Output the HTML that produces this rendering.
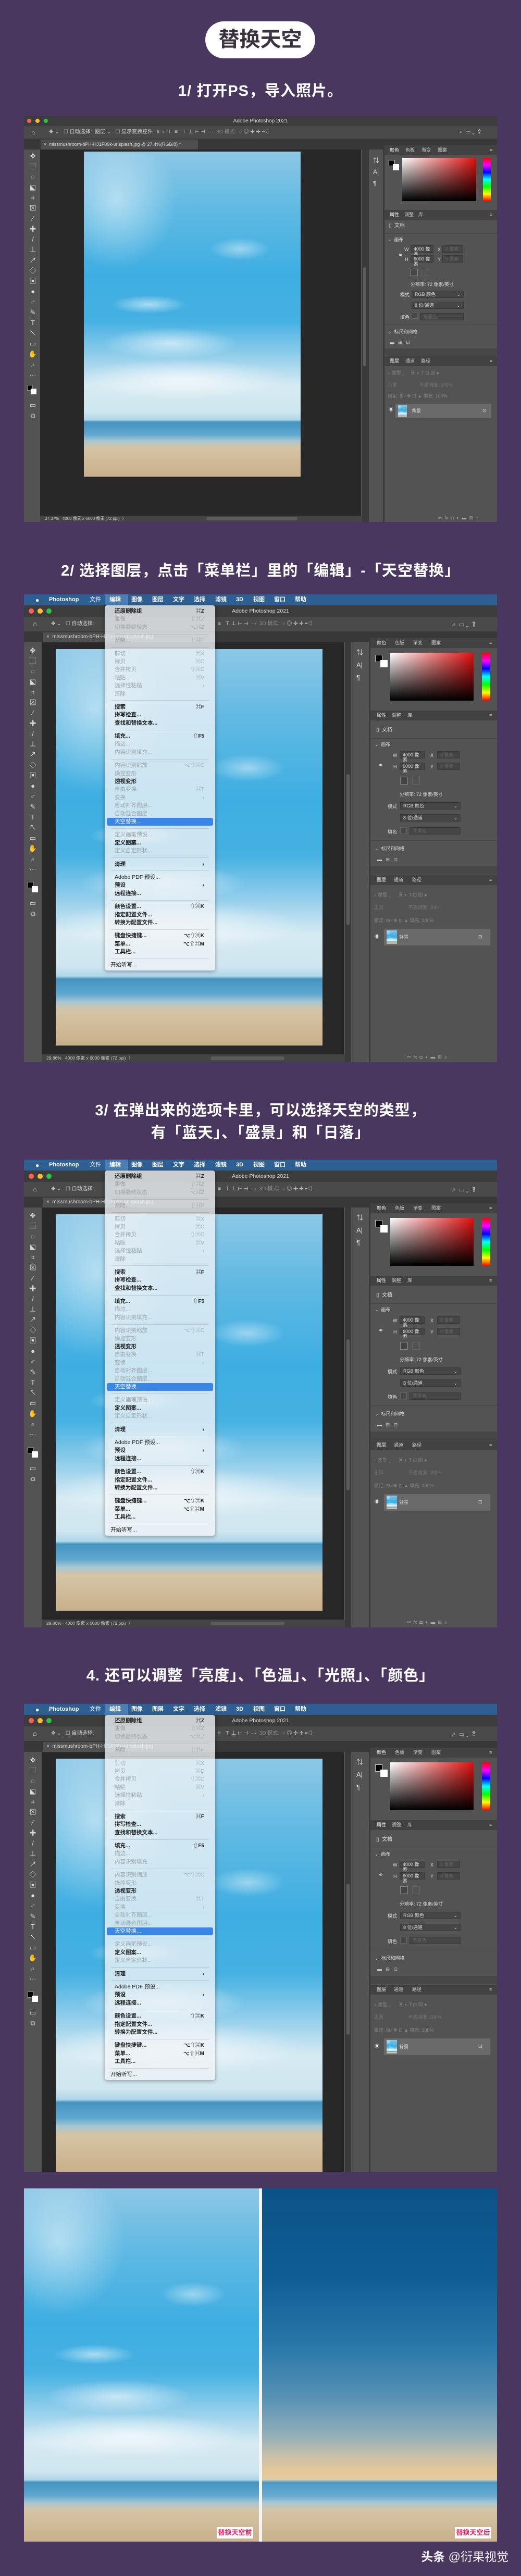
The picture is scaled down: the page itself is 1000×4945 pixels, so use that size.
<!DOCTYPE html>
<html><head><meta charset="utf-8">
<style>
*{margin:0;padding:0;box-sizing:border-box}
body{width:1000px;height:4945px;background:#4a3760;position:relative;overflow:hidden;font-family:"Liberation Sans","Noto Sans CJK SC",sans-serif}
.a{position:absolute}
.cap{position:absolute;left:0;width:1000px;text-align:center;color:#fff;font-size:29px;font-weight:700;font-family:"Liberation Sans","Noto Sans CJK SC",sans-serif;line-height:40px;letter-spacing:1px}
.pill{position:absolute;left:394px;top:41px;width:211px;height:71px;border-radius:36px;background:#fff;color:#3b3242;font-size:40px;font-weight:700;text-align:center;line-height:71px;font-family:"Liberation Sans","Noto Sans CJK SC",sans-serif}
.ps{position:absolute;left:46px;width:908px;overflow:hidden;background:#535353;color:#ddd;font-size:9px;line-height:1}
.ps .a{white-space:nowrap}
.sky{background:
 radial-gradient(ellipse 40% 30% at 15% 15%,rgba(255,255,255,.5),transparent 70%),
 radial-gradient(ellipse 20% 5% at 72% 30%,rgba(255,255,255,.45),transparent 70%),
 radial-gradient(ellipse 25% 4% at 30% 47%,rgba(255,255,255,.55),transparent 70%),
 radial-gradient(ellipse 45% 7% at 40% 59%,rgba(255,255,255,.6),transparent 70%),
 radial-gradient(ellipse 70% 9% at 45% 70%,rgba(255,255,255,.7),transparent 70%),
 linear-gradient(to bottom,#8cc7e6 0%,#5fb9e3 18%,#3eaee2 38%,#45b1e2 52%,#8ccbea 62%,#d6eaf2 72%,#cfe6f0 80%,#b0d6e8 82.5%,#4493bf 83.2%,#5ea7cf 87%,#a6c6d2 89%,#d5c4a5 91%,#c9b08a 100%)}
.after{background:
 linear-gradient(to bottom,#0b5288 0%,#0f5d94 25%,#2a78aa 45%,#5a93b5 60%,#93aeb9 70%,#c9c0a8 76%,#e9c994 81%,#d8cdb0 82.5%,#4c9ac4 83.2%,#66abd0 87%,#a6c6d2 89%,#d5c4a5 91%,#c9b08a 100%)}
.hdr{position:absolute;background:#424242;height:19px}
.hdr span{position:absolute;top:5px;color:#ccc;font-size:9px}
.tools span{position:absolute;left:6px;color:#d8d8d8;font-size:13px;line-height:14px;width:18px;text-align:center}
.menu{position:absolute;left:155px;top:21px;width:212px;height:701px;background:rgba(238,243,246,.8);border-radius:5px;box-shadow:0 2px 8px rgba(0,0,0,.35);padding-top:4px}
.menu div{position:relative;height:15.4px;line-height:15.4px;padding-left:19px;font-size:10.5px;color:#1b1b1b;font-weight:700}
.menu div.d{color:#9aa3a8;font-weight:400}
.menu div i{position:absolute;right:21px;top:0;font-style:normal;font-size:10px}
.menu hr{border:0;border-top:1px solid rgba(0,0,0,.12);margin:4.5px 12px 4.5px 12px}
.menu div.h{background:#3a85e8;color:#fff;margin:0 4px;padding-left:15px;border-radius:3px;font-weight:400}
.bar{position:absolute;left:0;width:908px;height:21px;background:#2d5f92;color:#fff;font-size:11px;font-weight:700}
.bar span{position:absolute;top:5px}
.dd{position:absolute;background:#454545;border:1px solid #3a3a3a;height:14px;color:#ddd;font-size:9px;padding:2px 5px}
.lt{position:absolute;width:10px;height:10px;border-radius:50%}
.lbl{position:absolute;height:22px;background:#fff;color:#d8235a;font-size:13px;font-weight:700;text-align:center;line-height:22px;white-space:nowrap}
</style></head><body>

<div class="pill">替换天空</div>
<div class="cap" style="top:155px">1/ 打开PS，导入照片。</div>

<!-- SCREEN 1 -->
<div class="ps" style="top:223px;height:779px">
 <div class="a" style="left:0;top:0;width:908px;height:19px;background:#3c3c3c"></div>
 <div class="lt" style="left:6px;top:5px;width:8px;height:8px;background:#fe5f57"></div>
 <div class="lt" style="left:22px;top:5px;width:8px;height:8px;background:#febc2e"></div>
 <div class="lt" style="left:38px;top:5px;width:8px;height:8px;background:#28c840"></div>
 <div class="a" style="left:0;width:908px;top:5px;text-align:center;font-size:10px;color:#ddd">Adobe Photoshop 2021</div>
 <div class="a" style="left:0;top:19px;width:908px;height:24px;background:#4a4a4a"></div>
 <div class="a" style="left:14px;top:25px;font-size:12px;color:#ddd">⌂</div>
 <div class="a" style="left:48px;top:26px;font-size:10px;color:#ccc">✥ ⌄ &nbsp; ☐ 自动选择: &nbsp;图层 ⌄ &nbsp; ☐ 显示变换控件 &nbsp; ⊫ ⊨ ⊧ &nbsp;≡ &nbsp; ⊤ ⊥ ⊢ ⊣ &nbsp;··· &nbsp;<span style="color:#888">3D 模式:</span> &nbsp;◌ ◎ ✣ ✢ ▪◁</div>
 <div class="a" style="left:836px;top:25px;font-size:11px;color:#ddd">⌕ &nbsp;▭ ⌄ &nbsp;⇪</div>
 <div class="a" style="left:0;top:43px;width:908px;height:21px;background:#383838"></div>
 <div class="a" style="left:32px;top:45px;width:302px;height:19px;background:#4f4f4f;color:#ddd;font-size:9px;padding:5px 6px">×&nbsp; missmushroom-bPH-HJ1F09k-unsplash.jpg @ 27.4%(RGB/8) *</div>
 <div class="tools a" style="left:2px;top:64px;width:25px;height:703px">
  <span style="top:6px">✥</span><span style="top:26px">⬚</span><span style="top:46px">◌</span><span style="top:66px">⬕</span><span style="top:86px">⌗</span><span style="top:106px">⊠</span><span style="top:126px">⁄</span><span style="top:146px">✚</span><span style="top:166px">/</span><span style="top:186px">⊥</span><span style="top:206px">↗</span><span style="top:226px">◇</span><span style="top:246px">▣</span><span style="top:266px">●</span><span style="top:286px">♂</span><span style="top:306px">✎</span><span style="top:326px">T</span><span style="top:346px">↖</span><span style="top:366px">▭</span><span style="top:386px">✋</span><span style="top:406px">⌕</span><span style="top:426px">···</span>
  <div class="a" style="left:4px;top:452px;width:11px;height:11px;background:#000;border:1px solid #888"></div>
  <div class="a" style="left:11px;top:459px;width:11px;height:11px;background:#fff"></div>
  <span style="top:484px">▭</span><span style="top:504px">⧉</span>
 </div>
 <div class="a" style="left:31px;top:64px;width:616px;height:703px;background:#282828"></div>
 <div class="a sky" style="left:115px;top:68px;width:416px;height:624px"></div>
 <div class="a" style="left:649px;top:64px;width:11px;height:715px;background:#3a3a3a"></div>
 <div class="a" style="left:651px;top:290px;width:6px;height:190px;background:#5c5c5c;border-radius:3px"></div>
 <div class="a" style="left:660px;top:64px;width:2px;height:715px;background:#3a3a3a"></div>
 <div class="a" style="left:689px;top:64px;width:3px;height:715px;background:#3a3a3a"></div>
 <div class="a" style="left:670px;top:74px;font-size:12px;color:#ddd;line-height:22px">⇅<br>A|<br>¶</div>
 <div class="hdr" style="left:692px;top:56px;width:216px"><span style="left:10px;color:#eee">颜色</span><span style="left:40px">色板</span><span style="left:71px">渐变</span><span style="left:102px">图案</span><span style="left:202px">≡</span></div>
 <div class="a" style="left:700px;top:84px;width:12px;height:12px;background:#000;border:1px solid #ccc"></div>
 <div class="a" style="left:708px;top:92px;width:12px;height:12px;background:#fff"></div>
 <div class="a" style="left:726px;top:80px;width:142px;height:83px;background:linear-gradient(to bottom,rgba(0,0,0,0),#000),linear-gradient(to right,#fff,#e01010)"></div>
 <div class="a" style="left:881px;top:80px;width:15px;height:83px;background:linear-gradient(to bottom,#f00,#f0f,#00f,#0ff,#0f0,#ff0,#f00)"></div>
 <div class="hdr" style="left:692px;top:180px;width:216px"><span style="left:10px;color:#eee">属性</span><span style="left:38px">调整</span><span style="left:65px">库</span><span style="left:202px">≡</span></div>
 <div class="a" style="left:700px;top:206px;font-size:10px">▯ &nbsp;文档</div>
 <div class="a" style="left:692px;top:225px;width:216px;height:1px;background:#444"></div>
 <div class="a" style="left:698px;top:233px">⌄ &nbsp;画布</div>
 <div class="a" style="left:718px;top:262px;font-size:11px">⚭</div>
 <div class="a" style="left:730px;top:252px">W</div><div class="dd" style="left:742px;top:248px;width:44px">4000 像素</div><div class="a" style="left:794px;top:252px">X</div><div class="dd" style="left:803px;top:248px;width:40px;color:#666">0 像素</div>
 <div class="a" style="left:731px;top:271px">H</div><div class="dd" style="left:742px;top:267px;width:44px">6000 像素</div><div class="a" style="left:794px;top:271px">Y</div><div class="dd" style="left:803px;top:267px;width:40px;color:#666">0 像素</div>
 <div class="a" style="left:742px;top:293px;width:14px;height:14px;border:1px solid #888;background:#454545"></div><div class="a" style="left:762px;top:293px;width:14px;height:14px;border:1px solid #666"></div>
 <div class="a" style="left:742px;top:319px">分辨率: 72 像素/英寸</div>
 <div class="a" style="left:722px;top:339px">模式</div><div class="dd" style="left:744px;top:335px;width:100px">RGB 颜色 <span style="float:right">⌄</span></div>
 <div class="dd" style="left:744px;top:356px;width:100px">8 位/通道 <span style="float:right">⌄</span></div>
 <div class="a" style="left:722px;top:382px">填色</div><div class="a" style="left:744px;top:377px;width:12px;height:12px;background:#474747;border:1px solid #666"></div><div class="dd" style="left:760px;top:378px;width:84px;color:#666">背景色</div>
 <div class="a" style="left:692px;top:400px;width:216px;height:1px;background:#444"></div>
 <div class="a" style="left:698px;top:410px">⌄ &nbsp;标尺和网格</div>
 <div class="a" style="left:702px;top:430px;color:#ccc">▬ &nbsp; ⊞ &nbsp; ⊡</div>
 <div class="a" style="left:692px;top:446px;width:216px;height:14px;background:#474747"></div>
 <div class="hdr" style="left:692px;top:461px;width:216px"><span style="left:10px;color:#eee">图层</span><span style="left:40px">通道</span><span style="left:70px">路径</span><span style="left:202px">≡</span></div>
 <div class="a" style="left:698px;top:489px;color:#888">⌕ 类型 ⌄ &nbsp; &nbsp; ▣ ◐ T ⊡ ⊠ ●</div>
 <div class="a" style="left:698px;top:512px;color:#777">正常 &nbsp; &nbsp; &nbsp; &nbsp; &nbsp; &nbsp; &nbsp; &nbsp; 不透明度: 100%</div>
 <div class="a" style="left:698px;top:533px;color:#888">锁定: ⊞ ⁄ ✥ ⊡ ▲ 填充: 100%</div>
 <div class="a" style="left:700px;top:559px;color:#ddd">◉</div>
 <div class="a" style="left:713px;top:552px;width:184px;height:27px;background:#6a6a6a"></div>
 <div class="a sky" style="left:718px;top:555px;width:17px;height:22px"></div>
 <div class="a" style="left:744px;top:562px">背景</div><div class="a" style="left:880px;top:561px">⊡</div>
 <div class="a" style="left:795px;top:767px;color:#aaa">⚯ &nbsp;fx &nbsp;◘ &nbsp;◐ &nbsp;▬ &nbsp;⊞ &nbsp;⌂</div>
 <div class="a" style="left:31px;top:767px;width:618px;height:12px;background:#444"></div>
 <div class="a" style="left:40px;top:769px;font-size:8px;color:#ccc">27.37% &nbsp; 4000 像素 x 6000 像素 (72 ppi) &nbsp;〉</div>
 <div class="a" style="left:350px;top:769px;width:175px;height:7px;border-radius:4px;background:#5c5c5c"></div>
</div>

<div class="cap" style="top:1076px">2/ 选择图层，点击「菜单栏」里的「编辑」-「天空替换」</div>

<!-- SCREEN 2 -->
<div class="ps" style="top:1141px;height:898px">
 <div class="bar" style="top:0"><span style="left:22px;font-size:12px">●</span><span style="left:48px">Photoshop</span><span style="left:126px;font-weight:400">文件</span><span style="left:155px;top:0;width:45px;height:21px;background:#4a7fb5"></span><span style="left:164px">编辑</span><span style="left:206px">图像</span><span style="left:246px">图层</span><span style="left:286px">文字</span><span style="left:326px">选择</span><span style="left:367px">滤镜</span><span style="left:407px">3D</span><span style="left:440px">视图</span><span style="left:480px">窗口</span><span style="left:520px">帮助</span></div>
 <div class="a" style="left:0;top:21px;width:908px;height:22px;background:#3c3c3c"></div>
 <div class="lt" style="left:9px;top:27px;background:#fe5f57"></div><div class="lt" style="left:26px;top:27px;background:#febc2e"></div><div class="lt" style="left:43px;top:27px;background:#28c840"></div>
 <div class="a" style="left:0;width:908px;top:27px;text-align:center;font-size:10.5px;color:#ddd">Adobe Photoshop 2021</div>
 <div class="a" style="left:0;top:43px;width:908px;height:28px;background:#4a4a4a"></div>
 <div class="a" style="left:17px;top:50px;font-size:13px;color:#ddd">⌂</div>
 <div class="a" style="left:52px;top:52px;font-size:10px;color:#ccc">✥ ⌄ &nbsp; ☐ 自动选择: </div>
 <div class="a" style="left:372px;top:52px;font-size:10px;color:#ccc">≡ &nbsp; ⊤ ⊥ ⊢ ⊣ &nbsp;··· &nbsp;<span style="color:#888">3D 模式:</span> &nbsp;◌ ◎ ✣ ✢ ▪◁</div>
 <div class="a" style="left:822px;top:51px;font-size:12px;color:#ddd">⌕ &nbsp;▭ ⌄ &nbsp;⇪</div>
 <div class="a" style="left:0;top:71px;width:908px;height:21px;background:#383838"></div>
 <div class="a" style="left:36px;top:73px;width:330px;height:19px;background:#4f4f4f;color:#ddd;font-size:10px;padding:4px 7px">×&nbsp; missmushroom-bPH-HJ1F09k-unsplash.jpg</div>
 <div class="tools a" style="left:2px;top:92px;width:29px;height:791px">
  <span style="top:9px">✥</span><span style="top:29px">⬚</span><span style="top:49px">◌</span><span style="top:69px">⬕</span><span style="top:89px">⌗</span><span style="top:109px">⊠</span><span style="top:129px">⁄</span><span style="top:149px">✚</span><span style="top:169px">/</span><span style="top:189px">⊥</span><span style="top:209px">↗</span><span style="top:229px">◇</span><span style="top:249px">▣</span><span style="top:269px">●</span><span style="top:289px">♂</span><span style="top:309px">✎</span><span style="top:329px">T</span><span style="top:349px">↖</span><span style="top:369px">▭</span><span style="top:389px">✋</span><span style="top:409px">⌕</span><span style="top:429px">···</span>
  <div class="a" style="left:5px;top:460px;width:12px;height:12px;background:#000;border:1px solid #888"></div>
  <div class="a" style="left:13px;top:468px;width:12px;height:12px;background:#fff"></div>
  <span style="top:494px">▭</span><span style="top:514px">⧉</span>
 </div>
 <div class="a" style="left:34px;top:92px;width:580px;height:791px;background:#282828"></div>
 <div class="a sky" style="left:61px;top:105px;width:512px;height:761px"></div>
 <div class="a" style="left:616px;top:92px;width:12px;height:806px;background:#3a3a3a"></div>
 <div class="a" style="left:619px;top:345px;width:6px;height:290px;background:#5c5c5c;border-radius:3px"></div>
 <div class="a" style="left:662px;top:92px;width:3px;height:806px;background:#3a3a3a"></div>
 <div class="a" style="left:638px;top:100px;font-size:13px;color:#ddd;line-height:24px">⇅<br>A|<br>¶</div>
 <div class="hdr" style="left:665px;top:84px;width:243px"><span style="left:12px;color:#eee">颜色</span><span style="left:47px">色板</span><span style="left:82px">渐变</span><span style="left:117px">图案</span><span style="left:228px">≡</span></div>
 <div class="a" style="left:674px;top:116px;width:14px;height:14px;background:#000;border:1px solid #ccc"></div>
 <div class="a" style="left:684px;top:126px;width:14px;height:14px;background:#fff"></div>
 <div class="a" style="left:703px;top:112px;width:160px;height:92px;background:linear-gradient(to bottom,rgba(0,0,0,0),#000),linear-gradient(to right,#fff,#e01010)"></div>
 <div class="a" style="left:879px;top:112px;width:16px;height:92px;background:linear-gradient(to bottom,#f00,#f0f,#00f,#0ff,#0f0,#ff0,#f00)"></div>
 <div class="hdr" style="left:665px;top:223px;width:243px"><span style="left:12px;color:#eee">属性</span><span style="left:41px">调整</span><span style="left:71px">库</span><span style="left:228px">≡</span></div>
 <div class="a" style="left:676px;top:256px;font-size:10px">▯ &nbsp;文档</div>
 <div class="a" style="left:665px;top:276px;width:243px;height:1px;background:#444"></div>
 <div class="a" style="left:673px;top:284px">⌄ &nbsp;画布</div>
 <div class="a" style="left:680px;top:322px;font-size:12px">⚭</div>
 <div class="a" style="left:708px;top:305px">W</div><div class="dd" style="left:721px;top:301px;width:48px">4000 像素</div><div class="a" style="left:780px;top:305px">X</div><div class="dd" style="left:793px;top:301px;width:44px;color:#666">0 像素</div>
 <div class="a" style="left:709px;top:327px">H</div><div class="dd" style="left:721px;top:323px;width:48px">6000 像素</div><div class="a" style="left:780px;top:327px">Y</div><div class="dd" style="left:793px;top:323px;width:44px;color:#666">0 像素</div>
 <div class="a" style="left:722px;top:350px;width:15px;height:15px;border:1px solid #888;background:#454545"></div><div class="a" style="left:745px;top:350px;width:15px;height:15px;border:1px solid #666"></div>
 <div class="a" style="left:721px;top:380px">分辨率: 72 像素/英寸</div>
 <div class="a" style="left:698px;top:403px">模式</div><div class="dd" style="left:722px;top:399px;width:116px">RGB 颜色 <span style="float:right">⌄</span></div>
 <div class="dd" style="left:722px;top:422px;width:116px">8 位/通道 <span style="float:right">⌄</span></div>
 <div class="a" style="left:698px;top:452px">填色</div><div class="a" style="left:722px;top:447px;width:13px;height:13px;background:#474747;border:1px solid #666"></div><div class="dd" style="left:740px;top:447px;width:98px;color:#666">背景色</div>
 <div class="a" style="left:665px;top:472px;width:243px;height:1px;background:#444"></div>
 <div class="a" style="left:673px;top:484px">⌄ &nbsp;标尺和网格</div>
 <div class="a" style="left:678px;top:505px;color:#ccc">▬ &nbsp; ⊞ &nbsp; ⊡</div>
 <div class="a" style="left:665px;top:522px;width:243px;height:16px;background:#474747"></div>
 <div class="hdr" style="left:665px;top:539px;width:243px"><span style="left:12px;color:#eee">图层</span><span style="left:45px">通道</span><span style="left:80px">路径</span><span style="left:228px">≡</span></div>
 <div class="a" style="left:672px;top:573px;color:#888">⌕ 类型 ⌄ &nbsp; &nbsp; &nbsp;▣ ◐ T ⊡ ⊠ ●</div>
 <div class="a" style="left:672px;top:597px;color:#777">正常 &nbsp; &nbsp; &nbsp; &nbsp; &nbsp; &nbsp; &nbsp; &nbsp; &nbsp; 不透明度: 100%</div>
 <div class="a" style="left:672px;top:622px;color:#888">锁定: ⊞ ⁄ ✥ ⊡ ▲ 填充: 100%</div>
 <div class="a" style="left:673px;top:653px;color:#ddd">◉</div>
 <div class="a" style="left:691px;top:642px;width:204px;height:32px;background:#6a6a6a"></div>
 <div class="a sky" style="left:696px;top:645px;width:20px;height:26px"></div>
 <div class="a" style="left:720px;top:654px">背景</div><div class="a" style="left:872px;top:653px">⊡</div>
 <div class="a" style="left:735px;top:884px;color:#aaa">⚯ &nbsp;fx &nbsp;◘ &nbsp;◐ &nbsp;▬ &nbsp;⊞ &nbsp;⌂</div>
 <div class="a" style="left:34px;top:883px;width:582px;height:15px;background:#444"></div>
 <div class="a" style="left:43px;top:886px;font-size:8.5px;color:#ccc">29.86% &nbsp; 4000 像素 x 6000 像素 (72 ppi) &nbsp;〉</div>
 <div class="a" style="left:358px;top:887px;width:142px;height:7px;border-radius:4px;background:#5c5c5c"></div>
 <div class="menu">
  <div>还原删除组<i>⌘Z</i></div><div class="d">重做<i>⇧⌘Z</i></div><div class="d">切换最终状态<i>⌥⌘Z</i></div><hr>
  <div class="d">渐隐...<i>⇧⌘F</i></div><hr>
  <div class="d">剪切<i>⌘X</i></div><div class="d">拷贝<i>⌘C</i></div><div class="d">合并拷贝<i>⇧⌘C</i></div><div class="d">粘贴<i>⌘V</i></div><div class="d">选择性粘贴<i>›</i></div><div class="d">清除</div><hr>
  <div>搜索<i>⌘F</i></div><div>拼写检查...</div><div>查找和替换文本...</div><hr>
  <div>填充...<i>⇧F5</i></div><div class="d">描边...</div><div class="d">内容识别填充...</div><hr>
  <div class="d">内容识别缩放<i>⌥⇧⌘C</i></div><div class="d">操控变形</div><div>透视变形</div><div class="d">自由变换<i>⌘T</i></div><div class="d">变换<i>›</i></div><div class="d">自动对齐图层...</div><div class="d">自动混合图层...</div><div class="h">天空替换...</div><hr>
  <div class="d">定义画笔预设...</div><div>定义图案...</div><div class="d">定义自定形状...</div><hr>
  <div>清理<i>›</i></div><hr>
  <div style="font-weight:400">Adobe PDF 预设...</div><div>预设<i>›</i></div><div>远程连接...</div><hr>
  <div>颜色设置...<i>⇧⌘K</i></div><div>指定配置文件...</div><div>转换为配置文件...</div><hr>
  <div>键盘快捷键...<i>⌥⇧⌘K</i></div><div>菜单...<i>⌥⇧⌘M</i></div><div>工具栏...</div><hr>
  <div style="padding-left:11px;font-weight:400">开始听写...</div>
 </div>
</div>

<div class="cap" style="top:2112px">3/ 在弹出来的选项卡里，可以选择天空的类型，</div>
<div class="cap" style="top:2155px">有「蓝天」、「盛景」和「日落」</div>

<!-- SCREEN 3 -->
<div class="ps" style="top:2226px;height:898px">
 <div class="bar" style="top:0"><span style="left:22px;font-size:12px">●</span><span style="left:48px">Photoshop</span><span style="left:126px;font-weight:400">文件</span><span style="left:155px;top:0;width:45px;height:21px;background:#4a7fb5"></span><span style="left:164px">编辑</span><span style="left:206px">图像</span><span style="left:246px">图层</span><span style="left:286px">文字</span><span style="left:326px">选择</span><span style="left:367px">滤镜</span><span style="left:407px">3D</span><span style="left:440px">视图</span><span style="left:480px">窗口</span><span style="left:520px">帮助</span></div>
 <div class="a" style="left:0;top:21px;width:908px;height:22px;background:#3c3c3c"></div>
 <div class="lt" style="left:9px;top:27px;background:#fe5f57"></div><div class="lt" style="left:26px;top:27px;background:#febc2e"></div><div class="lt" style="left:43px;top:27px;background:#28c840"></div>
 <div class="a" style="left:0;width:908px;top:27px;text-align:center;font-size:10.5px;color:#ddd">Adobe Photoshop 2021</div>
 <div class="a" style="left:0;top:43px;width:908px;height:28px;background:#4a4a4a"></div>
 <div class="a" style="left:17px;top:50px;font-size:13px;color:#ddd">⌂</div>
 <div class="a" style="left:52px;top:52px;font-size:10px;color:#ccc">✥ ⌄ &nbsp; ☐ 自动选择: </div>
 <div class="a" style="left:372px;top:52px;font-size:10px;color:#ccc">≡ &nbsp; ⊤ ⊥ ⊢ ⊣ &nbsp;··· &nbsp;<span style="color:#888">3D 模式:</span> &nbsp;◌ ◎ ✣ ✢ ▪◁</div>
 <div class="a" style="left:822px;top:51px;font-size:12px;color:#ddd">⌕ &nbsp;▭ ⌄ &nbsp;⇪</div>
 <div class="a" style="left:0;top:71px;width:908px;height:21px;background:#383838"></div>
 <div class="a" style="left:36px;top:73px;width:330px;height:19px;background:#4f4f4f;color:#ddd;font-size:10px;padding:4px 7px">×&nbsp; missmushroom-bPH-HJ1F09k-unsplash.jpg</div>
 <div class="tools a" style="left:2px;top:92px;width:29px;height:791px">
  <span style="top:9px">✥</span><span style="top:29px">⬚</span><span style="top:49px">◌</span><span style="top:69px">⬕</span><span style="top:89px">⌗</span><span style="top:109px">⊠</span><span style="top:129px">⁄</span><span style="top:149px">✚</span><span style="top:169px">/</span><span style="top:189px">⊥</span><span style="top:209px">↗</span><span style="top:229px">◇</span><span style="top:249px">▣</span><span style="top:269px">●</span><span style="top:289px">♂</span><span style="top:309px">✎</span><span style="top:329px">T</span><span style="top:349px">↖</span><span style="top:369px">▭</span><span style="top:389px">✋</span><span style="top:409px">⌕</span><span style="top:429px">···</span>
  <div class="a" style="left:5px;top:460px;width:12px;height:12px;background:#000;border:1px solid #888"></div>
  <div class="a" style="left:13px;top:468px;width:12px;height:12px;background:#fff"></div>
  <span style="top:494px">▭</span><span style="top:514px">⧉</span>
 </div>
 <div class="a" style="left:34px;top:92px;width:580px;height:791px;background:#282828"></div>
 <div class="a sky" style="left:61px;top:105px;width:512px;height:761px"></div>
 <div class="a" style="left:616px;top:92px;width:12px;height:806px;background:#3a3a3a"></div>
 <div class="a" style="left:619px;top:345px;width:6px;height:290px;background:#5c5c5c;border-radius:3px"></div>
 <div class="a" style="left:662px;top:92px;width:3px;height:806px;background:#3a3a3a"></div>
 <div class="a" style="left:638px;top:100px;font-size:13px;color:#ddd;line-height:24px">⇅<br>A|<br>¶</div>
 <div class="hdr" style="left:665px;top:84px;width:243px"><span style="left:12px;color:#eee">颜色</span><span style="left:47px">色板</span><span style="left:82px">渐变</span><span style="left:117px">图案</span><span style="left:228px">≡</span></div>
 <div class="a" style="left:674px;top:116px;width:14px;height:14px;background:#000;border:1px solid #ccc"></div>
 <div class="a" style="left:684px;top:126px;width:14px;height:14px;background:#fff"></div>
 <div class="a" style="left:703px;top:112px;width:160px;height:92px;background:linear-gradient(to bottom,rgba(0,0,0,0),#000),linear-gradient(to right,#fff,#e01010)"></div>
 <div class="a" style="left:879px;top:112px;width:16px;height:92px;background:linear-gradient(to bottom,#f00,#f0f,#00f,#0ff,#0f0,#ff0,#f00)"></div>
 <div class="hdr" style="left:665px;top:223px;width:243px"><span style="left:12px;color:#eee">属性</span><span style="left:41px">调整</span><span style="left:71px">库</span><span style="left:228px">≡</span></div>
 <div class="a" style="left:676px;top:256px;font-size:10px">▯ &nbsp;文档</div>
 <div class="a" style="left:665px;top:276px;width:243px;height:1px;background:#444"></div>
 <div class="a" style="left:673px;top:284px">⌄ &nbsp;画布</div>
 <div class="a" style="left:680px;top:322px;font-size:12px">⚭</div>
 <div class="a" style="left:708px;top:305px">W</div><div class="dd" style="left:721px;top:301px;width:48px">4000 像素</div><div class="a" style="left:780px;top:305px">X</div><div class="dd" style="left:793px;top:301px;width:44px;color:#666">0 像素</div>
 <div class="a" style="left:709px;top:327px">H</div><div class="dd" style="left:721px;top:323px;width:48px">6000 像素</div><div class="a" style="left:780px;top:327px">Y</div><div class="dd" style="left:793px;top:323px;width:44px;color:#666">0 像素</div>
 <div class="a" style="left:722px;top:350px;width:15px;height:15px;border:1px solid #888;background:#454545"></div><div class="a" style="left:745px;top:350px;width:15px;height:15px;border:1px solid #666"></div>
 <div class="a" style="left:721px;top:380px">分辨率: 72 像素/英寸</div>
 <div class="a" style="left:698px;top:403px">模式</div><div class="dd" style="left:722px;top:399px;width:116px">RGB 颜色 <span style="float:right">⌄</span></div>
 <div class="dd" style="left:722px;top:422px;width:116px">8 位/通道 <span style="float:right">⌄</span></div>
 <div class="a" style="left:698px;top:452px">填色</div><div class="a" style="left:722px;top:447px;width:13px;height:13px;background:#474747;border:1px solid #666"></div><div class="dd" style="left:740px;top:447px;width:98px;color:#666">背景色</div>
 <div class="a" style="left:665px;top:472px;width:243px;height:1px;background:#444"></div>
 <div class="a" style="left:673px;top:484px">⌄ &nbsp;标尺和网格</div>
 <div class="a" style="left:678px;top:505px;color:#ccc">▬ &nbsp; ⊞ &nbsp; ⊡</div>
 <div class="a" style="left:665px;top:522px;width:243px;height:16px;background:#474747"></div>
 <div class="hdr" style="left:665px;top:539px;width:243px"><span style="left:12px;color:#eee">图层</span><span style="left:45px">通道</span><span style="left:80px">路径</span><span style="left:228px">≡</span></div>
 <div class="a" style="left:672px;top:573px;color:#888">⌕ 类型 ⌄ &nbsp; &nbsp; &nbsp;▣ ◐ T ⊡ ⊠ ●</div>
 <div class="a" style="left:672px;top:597px;color:#777">正常 &nbsp; &nbsp; &nbsp; &nbsp; &nbsp; &nbsp; &nbsp; &nbsp; &nbsp; 不透明度: 100%</div>
 <div class="a" style="left:672px;top:622px;color:#888">锁定: ⊞ ⁄ ✥ ⊡ ▲ 填充: 100%</div>
 <div class="a" style="left:673px;top:653px;color:#ddd">◉</div>
 <div class="a" style="left:691px;top:642px;width:204px;height:32px;background:#6a6a6a"></div>
 <div class="a sky" style="left:696px;top:645px;width:20px;height:26px"></div>
 <div class="a" style="left:720px;top:654px">背景</div><div class="a" style="left:872px;top:653px">⊡</div>
 <div class="a" style="left:735px;top:884px;color:#aaa">⚯ &nbsp;fx &nbsp;◘ &nbsp;◐ &nbsp;▬ &nbsp;⊞ &nbsp;⌂</div>
 <div class="a" style="left:34px;top:883px;width:582px;height:15px;background:#444"></div>
 <div class="a" style="left:43px;top:886px;font-size:8.5px;color:#ccc">29.86% &nbsp; 4000 像素 x 6000 像素 (72 ppi) &nbsp;〉</div>
 <div class="a" style="left:358px;top:887px;width:142px;height:7px;border-radius:4px;background:#5c5c5c"></div>
 <div class="menu">
  <div>还原删除组<i>⌘Z</i></div><div class="d">重做<i>⇧⌘Z</i></div><div class="d">切换最终状态<i>⌥⌘Z</i></div><hr>
  <div class="d">渐隐...<i>⇧⌘F</i></div><hr>
  <div class="d">剪切<i>⌘X</i></div><div class="d">拷贝<i>⌘C</i></div><div class="d">合并拷贝<i>⇧⌘C</i></div><div class="d">粘贴<i>⌘V</i></div><div class="d">选择性粘贴<i>›</i></div><div class="d">清除</div><hr>
  <div>搜索<i>⌘F</i></div><div>拼写检查...</div><div>查找和替换文本...</div><hr>
  <div>填充...<i>⇧F5</i></div><div class="d">描边...</div><div class="d">内容识别填充...</div><hr>
  <div class="d">内容识别缩放<i>⌥⇧⌘C</i></div><div class="d">操控变形</div><div>透视变形</div><div class="d">自由变换<i>⌘T</i></div><div class="d">变换<i>›</i></div><div class="d">自动对齐图层...</div><div class="d">自动混合图层...</div><div class="h">天空替换...</div><hr>
  <div class="d">定义画笔预设...</div><div>定义图案...</div><div class="d">定义自定形状...</div><hr>
  <div>清理<i>›</i></div><hr>
  <div style="font-weight:400">Adobe PDF 预设...</div><div>预设<i>›</i></div><div>远程连接...</div><hr>
  <div>颜色设置...<i>⇧⌘K</i></div><div>指定配置文件...</div><div>转换为配置文件...</div><hr>
  <div>键盘快捷键...<i>⌥⇧⌘K</i></div><div>菜单...<i>⌥⇧⌘M</i></div><div>工具栏...</div><hr>
  <div style="padding-left:11px;font-weight:400">开始听写...</div>
 </div>
</div>

<div class="cap" style="top:3197px">4. 还可以调整「亮度」、「色温」、「光照」、「颜色」</div>

<!-- SCREEN 4 -->
<div class="ps" style="top:3271px;height:898px">
 <div class="bar" style="top:0"><span style="left:22px;font-size:12px">●</span><span style="left:48px">Photoshop</span><span style="left:126px;font-weight:400">文件</span><span style="left:155px;top:0;width:45px;height:21px;background:#4a7fb5"></span><span style="left:164px">编辑</span><span style="left:206px">图像</span><span style="left:246px">图层</span><span style="left:286px">文字</span><span style="left:326px">选择</span><span style="left:367px">滤镜</span><span style="left:407px">3D</span><span style="left:440px">视图</span><span style="left:480px">窗口</span><span style="left:520px">帮助</span></div>
 <div class="a" style="left:0;top:21px;width:908px;height:22px;background:#3c3c3c"></div>
 <div class="lt" style="left:9px;top:27px;background:#fe5f57"></div><div class="lt" style="left:26px;top:27px;background:#febc2e"></div><div class="lt" style="left:43px;top:27px;background:#28c840"></div>
 <div class="a" style="left:0;width:908px;top:27px;text-align:center;font-size:10.5px;color:#ddd">Adobe Photoshop 2021</div>
 <div class="a" style="left:0;top:43px;width:908px;height:28px;background:#4a4a4a"></div>
 <div class="a" style="left:17px;top:50px;font-size:13px;color:#ddd">⌂</div>
 <div class="a" style="left:52px;top:52px;font-size:10px;color:#ccc">✥ ⌄ &nbsp; ☐ 自动选择: </div>
 <div class="a" style="left:372px;top:52px;font-size:10px;color:#ccc">≡ &nbsp; ⊤ ⊥ ⊢ ⊣ &nbsp;··· &nbsp;<span style="color:#888">3D 模式:</span> &nbsp;◌ ◎ ✣ ✢ ▪◁</div>
 <div class="a" style="left:822px;top:51px;font-size:12px;color:#ddd">⌕ &nbsp;▭ ⌄ &nbsp;⇪</div>
 <div class="a" style="left:0;top:71px;width:908px;height:21px;background:#383838"></div>
 <div class="a" style="left:36px;top:73px;width:330px;height:19px;background:#4f4f4f;color:#ddd;font-size:10px;padding:4px 7px">×&nbsp; missmushroom-bPH-HJ1F09k-unsplash.jpg</div>
 <div class="tools a" style="left:2px;top:92px;width:29px;height:806px">
  <span style="top:9px">✥</span><span style="top:29px">⬚</span><span style="top:49px">◌</span><span style="top:69px">⬕</span><span style="top:89px">⌗</span><span style="top:109px">⊠</span><span style="top:129px">⁄</span><span style="top:149px">✚</span><span style="top:169px">/</span><span style="top:189px">⊥</span><span style="top:209px">↗</span><span style="top:229px">◇</span><span style="top:249px">▣</span><span style="top:269px">●</span><span style="top:289px">♂</span><span style="top:309px">✎</span><span style="top:329px">T</span><span style="top:349px">↖</span><span style="top:369px">▭</span><span style="top:389px">✋</span><span style="top:409px">⌕</span><span style="top:429px">···</span>
  <div class="a" style="left:5px;top:460px;width:12px;height:12px;background:#000;border:1px solid #888"></div>
  <div class="a" style="left:13px;top:468px;width:12px;height:12px;background:#fff"></div>
  <span style="top:494px">▭</span><span style="top:514px">⧉</span>
 </div>
 <div class="a" style="left:34px;top:92px;width:580px;height:806px;background:#282828"></div>
 <div class="a sky" style="left:61px;top:105px;width:512px;height:793px"></div>
 <div class="a" style="left:616px;top:92px;width:12px;height:806px;background:#3a3a3a"></div>
 <div class="a" style="left:619px;top:345px;width:6px;height:290px;background:#5c5c5c;border-radius:3px"></div>
 <div class="a" style="left:662px;top:92px;width:3px;height:806px;background:#3a3a3a"></div>
 <div class="a" style="left:638px;top:100px;font-size:13px;color:#ddd;line-height:24px">⇅<br>A|<br>¶</div>
 <div class="hdr" style="left:665px;top:84px;width:243px"><span style="left:12px;color:#eee">颜色</span><span style="left:47px">色板</span><span style="left:82px">渐变</span><span style="left:117px">图案</span><span style="left:228px">≡</span></div>
 <div class="a" style="left:674px;top:116px;width:14px;height:14px;background:#000;border:1px solid #ccc"></div>
 <div class="a" style="left:684px;top:126px;width:14px;height:14px;background:#fff"></div>
 <div class="a" style="left:703px;top:112px;width:160px;height:92px;background:linear-gradient(to bottom,rgba(0,0,0,0),#000),linear-gradient(to right,#fff,#e01010)"></div>
 <div class="a" style="left:879px;top:112px;width:16px;height:92px;background:linear-gradient(to bottom,#f00,#f0f,#00f,#0ff,#0f0,#ff0,#f00)"></div>
 <div class="hdr" style="left:665px;top:223px;width:243px"><span style="left:12px;color:#eee">属性</span><span style="left:41px">调整</span><span style="left:71px">库</span><span style="left:228px">≡</span></div>
 <div class="a" style="left:676px;top:256px;font-size:10px">▯ &nbsp;文档</div>
 <div class="a" style="left:665px;top:276px;width:243px;height:1px;background:#444"></div>
 <div class="a" style="left:673px;top:284px">⌄ &nbsp;画布</div>
 <div class="a" style="left:680px;top:322px;font-size:12px">⚭</div>
 <div class="a" style="left:708px;top:305px">W</div><div class="dd" style="left:721px;top:301px;width:48px">4000 像素</div><div class="a" style="left:780px;top:305px">X</div><div class="dd" style="left:793px;top:301px;width:44px;color:#666">0 像素</div>
 <div class="a" style="left:709px;top:327px">H</div><div class="dd" style="left:721px;top:323px;width:48px">6000 像素</div><div class="a" style="left:780px;top:327px">Y</div><div class="dd" style="left:793px;top:323px;width:44px;color:#666">0 像素</div>
 <div class="a" style="left:722px;top:350px;width:15px;height:15px;border:1px solid #888;background:#454545"></div><div class="a" style="left:745px;top:350px;width:15px;height:15px;border:1px solid #666"></div>
 <div class="a" style="left:721px;top:380px">分辨率: 72 像素/英寸</div>
 <div class="a" style="left:698px;top:403px">模式</div><div class="dd" style="left:722px;top:399px;width:116px">RGB 颜色 <span style="float:right">⌄</span></div>
 <div class="dd" style="left:722px;top:422px;width:116px">8 位/通道 <span style="float:right">⌄</span></div>
 <div class="a" style="left:698px;top:452px">填色</div><div class="a" style="left:722px;top:447px;width:13px;height:13px;background:#474747;border:1px solid #666"></div><div class="dd" style="left:740px;top:447px;width:98px;color:#666">背景色</div>
 <div class="a" style="left:665px;top:472px;width:243px;height:1px;background:#444"></div>
 <div class="a" style="left:673px;top:484px">⌄ &nbsp;标尺和网格</div>
 <div class="a" style="left:678px;top:505px;color:#ccc">▬ &nbsp; ⊞ &nbsp; ⊡</div>
 <div class="a" style="left:665px;top:522px;width:243px;height:16px;background:#474747"></div>
 <div class="hdr" style="left:665px;top:539px;width:243px"><span style="left:12px;color:#eee">图层</span><span style="left:45px">通道</span><span style="left:80px">路径</span><span style="left:228px">≡</span></div>
 <div class="a" style="left:672px;top:573px;color:#888">⌕ 类型 ⌄ &nbsp; &nbsp; &nbsp;▣ ◐ T ⊡ ⊠ ●</div>
 <div class="a" style="left:672px;top:597px;color:#777">正常 &nbsp; &nbsp; &nbsp; &nbsp; &nbsp; &nbsp; &nbsp; &nbsp; &nbsp; 不透明度: 100%</div>
 <div class="a" style="left:672px;top:622px;color:#888">锁定: ⊞ ⁄ ✥ ⊡ ▲ 填充: 100%</div>
 <div class="a" style="left:673px;top:653px;color:#ddd">◉</div>
 <div class="a" style="left:691px;top:642px;width:204px;height:32px;background:#6a6a6a"></div>
 <div class="a sky" style="left:696px;top:645px;width:20px;height:26px"></div>
 <div class="a" style="left:720px;top:654px">背景</div><div class="a" style="left:872px;top:653px">⊡</div>
 <div class="menu">
  <div>还原删除组<i>⌘Z</i></div><div class="d">重做<i>⇧⌘Z</i></div><div class="d">切换最终状态<i>⌥⌘Z</i></div><hr>
  <div class="d">渐隐...<i>⇧⌘F</i></div><hr>
  <div class="d">剪切<i>⌘X</i></div><div class="d">拷贝<i>⌘C</i></div><div class="d">合并拷贝<i>⇧⌘C</i></div><div class="d">粘贴<i>⌘V</i></div><div class="d">选择性粘贴<i>›</i></div><div class="d">清除</div><hr>
  <div>搜索<i>⌘F</i></div><div>拼写检查...</div><div>查找和替换文本...</div><hr>
  <div>填充...<i>⇧F5</i></div><div class="d">描边...</div><div class="d">内容识别填充...</div><hr>
  <div class="d">内容识别缩放<i>⌥⇧⌘C</i></div><div class="d">操控变形</div><div>透视变形</div><div class="d">自由变换<i>⌘T</i></div><div class="d">变换<i>›</i></div><div class="d">自动对齐图层...</div><div class="d">自动混合图层...</div><div class="h">天空替换...</div><hr>
  <div class="d">定义画笔预设...</div><div>定义图案...</div><div class="d">定义自定形状...</div><hr>
  <div>清理<i>›</i></div><hr>
  <div style="font-weight:400">Adobe PDF 预设...</div><div>预设<i>›</i></div><div>远程连接...</div><hr>
  <div>颜色设置...<i>⇧⌘K</i></div><div>指定配置文件...</div><div>转换为配置文件...</div><hr>
  <div>键盘快捷键...<i>⌥⇧⌘K</i></div><div>菜单...<i>⌥⇧⌘M</i></div><div>工具栏...</div><hr>
  <div style="padding-left:11px;font-weight:400">开始听写...</div>
 </div>
</div>

<!-- comparison -->
<div class="a sky" style="left:46px;top:4201px;width:451px;height:678px"></div>
<div class="a" style="left:497px;top:4201px;width:6px;height:678px;background:#f4f4f4"></div>
<div class="a after" style="left:503px;top:4201px;width:451px;height:678px"></div>
<div class="lbl" style="left:416px;top:4851px;width:70px">替换天空前</div>
<div class="lbl" style="left:873px;top:4851px;width:70px">替换天空后</div>
<div class="a" style="left:760px;top:4893px;width:216px;text-align:right;color:#f2f2f2;font-size:23px;line-height:30px;white-space:nowrap"><b>头条</b> @衍果视觉</div>
</body></html>
